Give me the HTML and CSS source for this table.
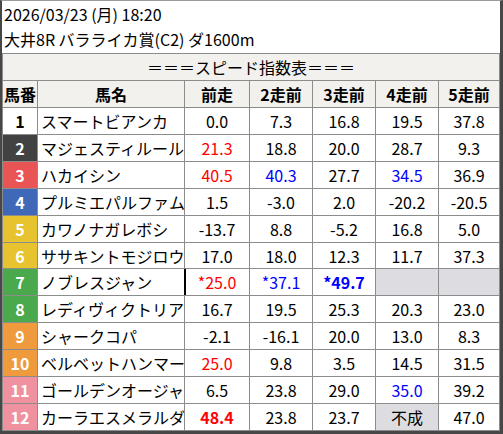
FILE: index.html
```html
<!DOCTYPE html>
<html lang="ja">
<head>
<meta charset="utf-8">
<link rel="stylesheet" href="styles.css">
</head>
<body>
<div class="frame">
  <div class="info">
    <div class="info-line">2026/03/23 (月) 18:20</div>
    <div class="info-line">大井8R バラライカ賞(C2) ダ1600m</div>
  </div>
  <div class="grid">
    <div class="title">＝＝＝スピード指数表＝＝＝</div>
    <div class="hd">馬番</div><div class="hd">馬名</div><div class="hd">前走</div><div class="hd">2走前</div><div class="hd">3走前</div><div class="hd">4走前</div><div class="hd">5走前</div>

    <div class="no w1">1</div><div class="nm">スマートビアンカ</div><div class="v">0.0</div><div class="v">7.3</div><div class="v">16.8</div><div class="v">19.5</div><div class="v">37.8</div>
    <div class="no w2">2</div><div class="nm">マジェスティルール</div><div class="v red">21.3</div><div class="v">18.8</div><div class="v">20.0</div><div class="v">28.7</div><div class="v">9.3</div>
    <div class="no w3">3</div><div class="nm">ハカイシン</div><div class="v red">40.5</div><div class="v blue">40.3</div><div class="v">27.7</div><div class="v blue">34.5</div><div class="v">36.9</div>
    <div class="no w4">4</div><div class="nm">プルミエパルファム</div><div class="v">1.5</div><div class="v">-3.0</div><div class="v">2.0</div><div class="v">-20.2</div><div class="v">-20.5</div>
    <div class="no w5">5</div><div class="nm">カワノナガレボシ</div><div class="v">-13.7</div><div class="v">8.8</div><div class="v">-5.2</div><div class="v">16.8</div><div class="v">5.0</div>
    <div class="no w5">6</div><div class="nm">ササキントモジロウ</div><div class="v">17.0</div><div class="v">18.0</div><div class="v">12.3</div><div class="v">11.7</div><div class="v">37.3</div>
    <div class="no w7">7</div><div class="nm">ノブレスジャン</div><div class="v red mark">*25.0</div><div class="v blue">*37.1</div><div class="v blue bold">*49.7</div><div class="v na"></div><div class="v na"></div>
    <div class="no w7">8</div><div class="nm">レディヴィクトリア</div><div class="v">16.7</div><div class="v">19.5</div><div class="v">25.3</div><div class="v">20.3</div><div class="v">23.0</div>
    <div class="no w9">9</div><div class="nm">シャークコパ</div><div class="v">-2.1</div><div class="v">-16.1</div><div class="v">20.0</div><div class="v">13.0</div><div class="v">8.3</div>
    <div class="no w9">10</div><div class="nm">ベルベットハンマー</div><div class="v red">25.0</div><div class="v">9.8</div><div class="v">3.5</div><div class="v">14.5</div><div class="v">31.5</div>
    <div class="no w11">11</div><div class="nm">ゴールデンオージャ</div><div class="v">6.5</div><div class="v">23.8</div><div class="v">29.0</div><div class="v blue">35.0</div><div class="v">39.2</div>
    <div class="no w11">12</div><div class="nm">カーラエスメラルダ</div><div class="v red bold">48.4</div><div class="v">23.8</div><div class="v">23.7</div><div class="v na">不成</div><div class="v">47.0</div>
  </div>
</div>
</body>
</html>
```

FILE: styles.css
```css
html, body {
  margin: 0;
  padding: 0;
  background: #ffffff;
}

body {
  font-family: "Noto Sans CJK JP", "Noto Sans", sans-serif;
  color: #000;
}

.frame {
  width: 498px;
  height: 430px;
  border-top: 1px solid #9a9a9a;
  border-left: 2px solid #474747;
  border-right: 3px solid #474747;
  border-bottom: 3px solid #474747;
  display: flex;
  flex-direction: column;
  background: #fff;
}

.info {
  height: 52px;
  padding: 0 0 0 2px;
  display: flex;
  flex-direction: column;
  justify-content: center;
  font-size: 16px;
  line-height: 25px;
}

.grid {
  height: 378px;
  box-sizing: border-box;
  display: grid;
  grid-template-columns: 34px 146px 64px 62px 62px 62px 60px;
  grid-template-rows: 26px 26px repeat(12, 1fr);
  gap: 1px;
  padding: 1px;
  background: #8c8c8c;
}

.grid > div {
  background: #fff;
  display: flex;
  align-items: center;
  justify-content: center;
  font-size: 16px;
  white-space: nowrap;
  overflow: hidden;
}

.grid > .title {
  grid-column: 1 / -1;
  background: #f2f1ed;
}

.grid > .hd {
  background: #f2f1ed;
  font-weight: bold;
}

.grid > .nm {
  justify-content: flex-start;
  padding-left: 3px;
}

.grid > .no {
  font-weight: bold;
  color: #fff;
}

.grid > .w1 { background: #ffffff; color: #000; }
.grid > .w2 { background: #424242; }
.grid > .w3 { background: #e95454; }
.grid > .w4 { background: #4068b9; }
.grid > .w5 { background: #e7c32f; }
.grid > .w7 { background: #4aa94d; }
.grid > .w9 { background: #ef9a3c; }
.grid > .w11 { background: #f0919f; }

.red { color: #ff0000; }
.blue { color: #0000ff; }
.bold { font-weight: bold; }

.grid > .na {
  background: #dddde1;
}

.grid > .mark {
  box-shadow: -1px 0 0 #000, inset 1px 0 0 #000;
}
```
